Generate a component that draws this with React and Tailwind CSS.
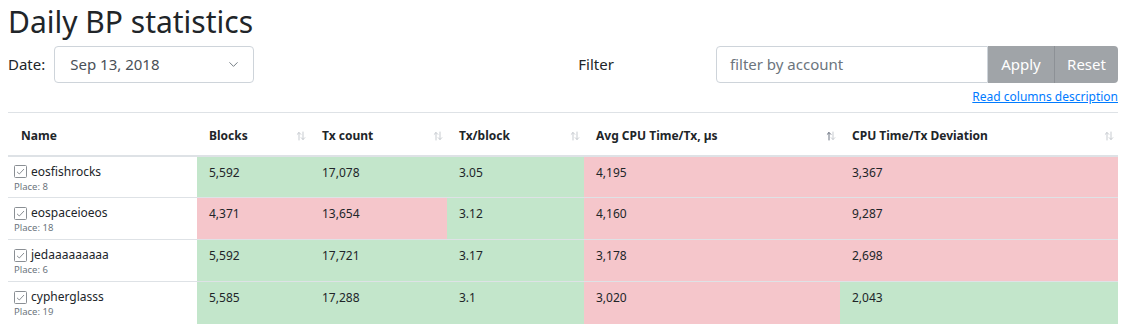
import { ChevronDown } from 'lucide-react';

const rows = [
    { name: 'eosfishrocks', place: 8, cells: [['5,592', 'g'], ['17,078', 'g'], ['3.05', 'g'], ['4,195', 'r'], ['3,367', 'r']] },
    { name: 'eospaceioeos', place: 18, cells: [['4,371', 'r'], ['13,654', 'r'], ['3.12', 'g'], ['4,160', 'r'], ['9,287', 'r']] },
    { name: 'jedaaaaaaaaa', place: 6, cells: [['5,592', 'g'], ['17,721', 'g'], ['3.17', 'g'], ['3,178', 'r'], ['2,698', 'r']] },
    { name: 'cypherglasss', place: 19, cells: [['5,585', 'g'], ['17,288', 'g'], ['3.1', 'g'], ['3,020', 'r'], ['2,043', 'g']] },
];

const columns = [
    { title: 'Blocks', width: 'w-[113px]' },
    { title: 'Tx count', width: 'w-[137px]' },
    { title: 'Tx/block', width: 'w-[137px]' },
    { title: 'Avg CPU Time/Tx, µs', width: 'w-[256px]', sorted: true },
    { title: 'CPU Time/Tx Deviation', width: 'w-[278px]' },
];

// two small arrows next to each sortable header
const SortIcon = ({ sorted }) => (
    <svg width="10" height="10" viewBox="0 0 10 10" className="shrink-0">
        <g fill="none" strokeWidth="1" strokeLinecap="round">
            <path d="M3 9V1.5M1.2 3.3L3 1.5l1.8 1.8" stroke={sorted ? '#6b7280' : '#c7cbd0'} />
            <path d="M7 1v7.5M5.2 6.7L7 8.5l1.8-1.8" stroke="#c7cbd0" />
        </g>
    </svg>
);

const CheckIcon = () => (
    <svg width="13" height="13" viewBox="0 0 13 13" className="shrink-0">
        <rect x="0.5" y="0.5" width="12" height="12" rx="1" fill="none" stroke="#8a8f94" />
        <path d="M3 6.8l2.3 2.2L10 4" fill="none" stroke="#8a8f94" strokeWidth="1" />
    </svg>
);

export default function App() {
    return (
        <div className="pl-2 pr-[11px] text-[#212529] font-['Noto_Sans',sans-serif] bg-white min-h-[324px]">
            <h1 className="text-[30px] leading-[38px] pt-[3px]">Daily BP statistics</h1>

            <div className="flex items-center mt-[5px] h-[37px]">
                <span className="text-[15px] mr-[9px]">Date:</span>
                <div className="w-[200px] h-[37px] border border-[#ced4da] rounded-[4px] flex items-center justify-between pl-[15px] pr-[12px] text-[15px] text-[#495057]">
                    <span>Sep 13, 2018</span>
                    <ChevronDown size={15} strokeWidth={1.5} className="text-[#6c757d]" />
                </div>
                <span className="text-[15px] ml-[324px]">Filter</span>
                <div className="ml-auto flex h-[37px]">
                    <div className="w-[272px] border border-[#ced4da] rounded-l-[4px] flex items-center pl-[13px] text-[15px] text-[#6c757d]">
                        filter by account
                    </div>
                    <button className="w-[67px] bg-[#a0a4a8] text-white text-[15px] border-r border-[#8d9196]">Apply</button>
                    <button className="w-[63px] bg-[#a0a4a8] text-white text-[15px] rounded-r-[4px]">Reset</button>
                </div>
            </div>

            <div className="flex justify-end mt-[4px] h-[20px]">
                <a href="#" className="text-[12px] text-[#007bff] underline leading-[20px]">Read columns description</a>
            </div>

            <table className="mt-[5px] w-[1110px] border-collapse table-fixed text-[12px]">
                <thead>
                    <tr className="border-t border-[#dee2e6] border-b-2">
                        <th className="w-[189px] h-[43px] text-left font-bold align-bottom pl-[13px] pb-[10px]">Name</th>
                        {columns.map((c) => (
                            <th key={c.title} className={`${c.width} h-[43px] font-bold text-left pl-[12px] pr-[4px] align-top pt-[14px]`}>
                                <div className="flex items-center justify-between">
                                    <span>{c.title}</span>
                                    <SortIcon sorted={c.sorted} />
                                </div>
                            </th>
                        ))}
                    </tr>
                </thead>
                <tbody>
                    {rows.map((r) => (
                        <tr key={r.name} className="border-t border-[#dee2e6] first:border-t-0">
                            <td className="h-[42px] align-top pl-[6px] pt-[7px] bg-white">
                                <div className="flex items-center gap-[4px] leading-[16px]">
                                    <CheckIcon />
                                    <span>{r.name}</span>
                                </div>
                                <div className="text-[9.5px] text-[#6c757d] leading-[13px]">Place: {r.place}</div>
                            </td>
                            {r.cells.map(([v, t], i) => (
                                <td
                                    key={i}
                                    className={`align-top pl-[12px] pt-[8px] leading-[16px] ${t === 'g' ? 'bg-[#c3e6cb]' : 'bg-[#f5c6cb]'}`}
                                >
                                    {v}
                                </td>
                            ))}
                        </tr>
                    ))}
                </tbody>
            </table>
        </div>
    );
}
